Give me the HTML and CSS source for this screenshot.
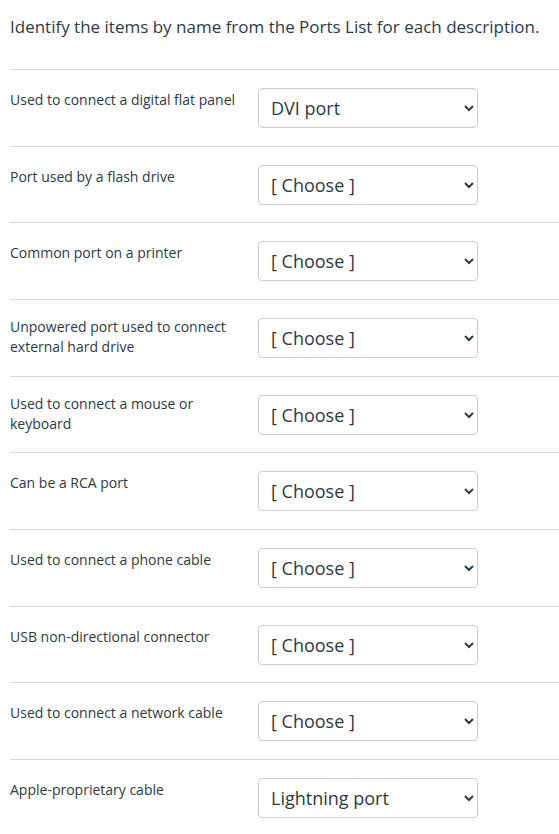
FILE: index.html
```html
<!DOCTYPE html>
<html lang="en">
<head>
<meta charset="utf-8">
<title>Ports matching</title>
<link rel="stylesheet" href="styles.css">
</head>
<body>
<div class="quiz">
  <p class="prompt">Identify the items by name from the Ports List for each description.</p>
  <div class="answers">
    <div class="row">
      <div class="label single">Used to connect a digital flat panel</div>
      <select class="pick"><option>[ Choose ]</option><option selected>DVI port</option></select>
    </div>
    <div class="row">
      <div class="label single">Port used by a flash drive</div>
      <select class="pick"><option>[ Choose ]</option></select>
    </div>
    <div class="row">
      <div class="label single">Common port on a printer</div>
      <select class="pick"><option>[ Choose ]</option></select>
    </div>
    <div class="row">
      <div class="label">Unpowered port used to connect external hard drive</div>
      <select class="pick"><option>[ Choose ]</option></select>
    </div>
    <div class="row">
      <div class="label">Used to connect a mouse or keyboard</div>
      <select class="pick"><option>[ Choose ]</option></select>
    </div>
    <div class="row">
      <div class="label single">Can be a RCA port</div>
      <select class="pick"><option>[ Choose ]</option></select>
    </div>
    <div class="row">
      <div class="label single">Used to connect a phone cable</div>
      <select class="pick"><option>[ Choose ]</option></select>
    </div>
    <div class="row">
      <div class="label single">USB non-directional connector</div>
      <select class="pick"><option>[ Choose ]</option></select>
    </div>
    <div class="row">
      <div class="label single">Used to connect a network cable</div>
      <select class="pick"><option>[ Choose ]</option></select>
    </div>
    <div class="row">
      <div class="label single">Apple-proprietary cable</div>
      <select class="pick"><option>[ Choose ]</option><option selected>Lightning port</option></select>
    </div>
  </div>
</div>
</body>
</html>
```
FILE: styles.css
```css
html, body {
  margin: 0;
  padding: 0;
  background: #ffffff;
}

body {
  font-family: "Open Sans", Lato, "Liberation Sans", sans-serif;
  color: #2d3b45;
}

.quiz {
  padding: 0 0 0 10px;
}

.prompt {
  margin: 0;
  padding-top: 15px;
  font-size: 17px;
  line-height: 24px;
  height: 54px;
}

.row {
  display: flex;
  align-items: flex-start;
  border-top: 1px solid #d8dbde;
  padding: 18px 0 17.67px;
}

.label {
  width: 240px;
  font-size: 14px;
  line-height: 20px;
  margin-top: -1px;
}

.label.single {
  margin-top: 2px;
}

.pick {
  margin-left: 8px;
  width: 220px;
  height: 40px;
  box-sizing: border-box;
  border: 1px solid #c7cdd1;
  border-radius: 4px;
  background: #ffffff;
  color: #2d3b45;
  font-family: "Open Sans", Lato, "Liberation Sans", sans-serif;
  font-size: 18px;
  padding: 0 8px 0 8px;
}
```
